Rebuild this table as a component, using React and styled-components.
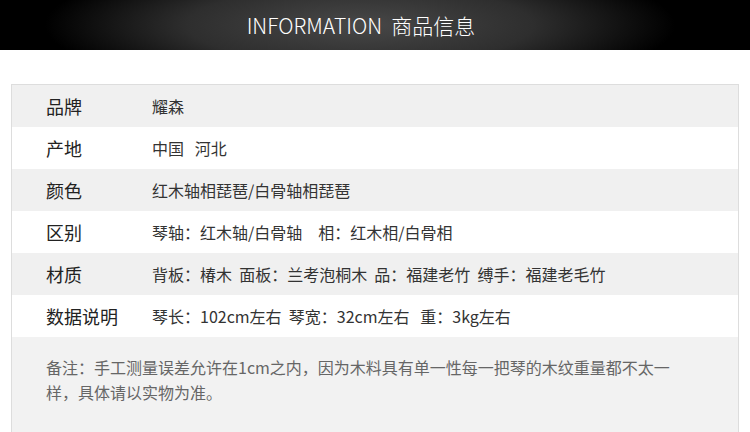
import React from "react";
import styled, { createGlobalStyle } from "styled-components";

const rows = [
  { label: "品牌", value: "耀森" },
  { label: "产地", value: "中国   河北" },
  { label: "颜色", value: "红木轴相琵琶/白骨轴相琵琶" },
  { label: "区别", value: "琴轴：红木轴/白骨轴\u3000相：红木相/白骨相" },
  { label: "材质", value: "背板：椿木  面板：兰考泡桐木  品：福建老竹  缚手：福建老毛竹" },
  { label: "数据说明", value: "琴长：102cm左右  琴宽：32cm左右   重：3kg左右" },
];

function App() {
  return (
    <Wrapper>
      <GlobalStyle />
      <Banner>
        <BannerTitle>INFORMATION&nbsp;&nbsp;商品信息</BannerTitle>
      </Banner>
      <Table>
        {rows.map((row, i) => (
          <Row key={row.label} $shaded={i % 2 === 0}>
            <Label>{row.label}</Label>
            <Value>{row.value}</Value>
          </Row>
        ))}
        <Note>
          备注：手工测量误差允许在1cm之内，因为木料具有单一性每一把琴的木纹重量都不太一样，具体请以实物为准。
        </Note>
      </Table>
    </Wrapper>
  );
}

export default App;

const GlobalStyle = createGlobalStyle`
  html, body {
    margin: 0;
    padding: 0;
    background: #ffffff;
  }
  body {
    font-family: "Noto Sans CJK SC", "Noto Sans", sans-serif;
    color: #333333;
  }
`;

const Wrapper = styled.div`
  display: flex;
  flex-direction: column;
  width: 750px;
  height: 432px;
  overflow: hidden;
`;

const Banner = styled.div`
  display: flex;
  justify-content: center;
  align-items: center;
  height: 50px;
  padding-right: 28px;
  background: radial-gradient(ellipse 42% 140% at 48% 50%, #484848 0%, #2e2e2e 55%, #000000 100%);
`;

const BannerTitle = styled.div`
  color: #ffffff;
  font-size: 21px;
  font-weight: 300;
  line-height: 1;
  margin-top: 1px;
`;

const Table = styled.div`
  display: flex;
  flex-direction: column;
  margin: 34px 11px 0 11px;
  border: 1px solid #dddddd;
  border-bottom: none;
  flex: 1;
`;

const Row = styled.div`
  display: grid;
  grid-template-columns: 106px 1fr;
  align-items: center;
  height: 42px;
  padding-left: 34px;
  background: ${(p) => (p.$shaded ? "#f0f0f0" : "#ffffff")};
`;

const Label = styled.div`
  font-size: 18px;
  color: #222222;
`;

const Value = styled.div`
  font-size: 16px;
  color: #333333;
  white-space: pre;
`;

const Note = styled.div`
  flex: 1;
  background: #f2f2f2;
  padding: 18px 62px 0 34px;
  font-size: 16px;
  line-height: 25px;
  color: #666666;
`;
